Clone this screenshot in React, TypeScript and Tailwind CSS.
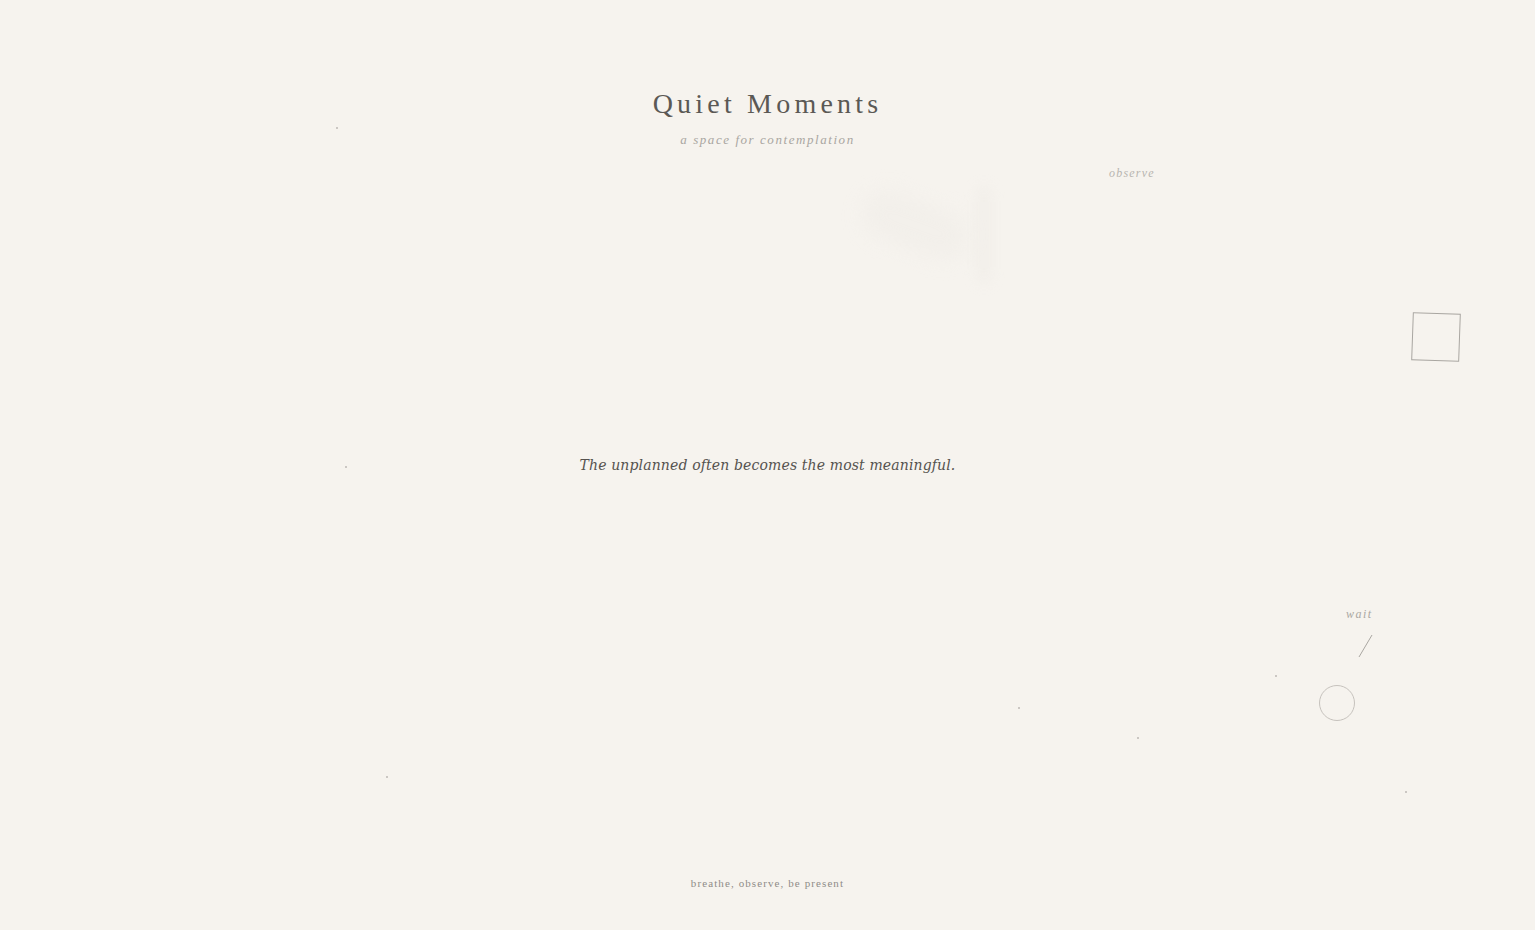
import React from "react";

const dots: [number, number][] = [
  [337, 128],
  [346, 467],
  [387, 777],
  [1019, 708],
  [1138, 738],
  [1276, 676],
  [1406, 792],
];

export default function App() {
  return (
    <div className="relative flex h-[930px] w-full flex-col items-center overflow-hidden bg-[#f6f3ee] font-['Liberation_Serif',serif]">
      {/* faint blurred blob */}
      <div className="pointer-events-none absolute left-[860px] top-[200px] h-[50px] w-[110px] rotate-[20deg] rounded-full bg-[#ece9e4] opacity-35 blur-[10px]" />
      <div className="pointer-events-none absolute left-[975px] top-[185px] h-[100px] w-[18px] rounded-full bg-[#ece9e4] opacity-35 blur-[6px]" />

      {dots.map(([x, y], i) => (
        <div
          key={i}
          className="absolute h-[2px] w-[2px] rounded-full bg-[#bdb9b4]"
          style={{ left: x - 1, top: y - 1 }}
        />
      ))}

      <span className="absolute left-[1109px] top-[164px] text-[12px] italic tracking-[0.1em] text-[#b8b5b0]">
        observe
      </span>

      <div className="absolute left-[1412px] top-[313px] h-[48px] w-[48px] rotate-[2deg] border border-[#a9a6a1]" />

      <span className="absolute left-[1346px] top-[605px] text-[12px] italic tracking-[0.12em] text-[#aaa7a2]">
        wait
      </span>
      <svg className="absolute left-[1355px] top-[632px]" width="22" height="28" viewBox="0 0 22 28">
        <line x1="17" y1="3" x2="4" y2="25" stroke="#aaa7a2" strokeWidth="1" />
      </svg>
      <div className="absolute left-[1319px] top-[685px] h-[36px] w-[36px] rounded-full border border-[#c6c2bd]" />

      <header className="mt-[86px] flex flex-col items-center">
        <h1 className="text-[28px] leading-[36px] tracking-[0.15em] text-[#5b5955]">Quiet Moments</h1>
        <p className="mt-[8px] text-[13px] italic tracking-[0.12em] text-[#a9a6a1]">a space for contemplation</p>
      </header>

      <main className="flex flex-1 items-center justify-center pb-[94px]">
        <p className="text-[14px] italic tracking-[0.01em] text-[#55524e] font-['DejaVu_Serif',serif]">
          The unplanned often becomes the most meaningful.
        </p>
      </main>

      <footer className="mb-[39px] text-[11px] tracking-[0.1em] text-[#8f8c88]">breathe, observe, be present</footer>
    </div>
  );
}
